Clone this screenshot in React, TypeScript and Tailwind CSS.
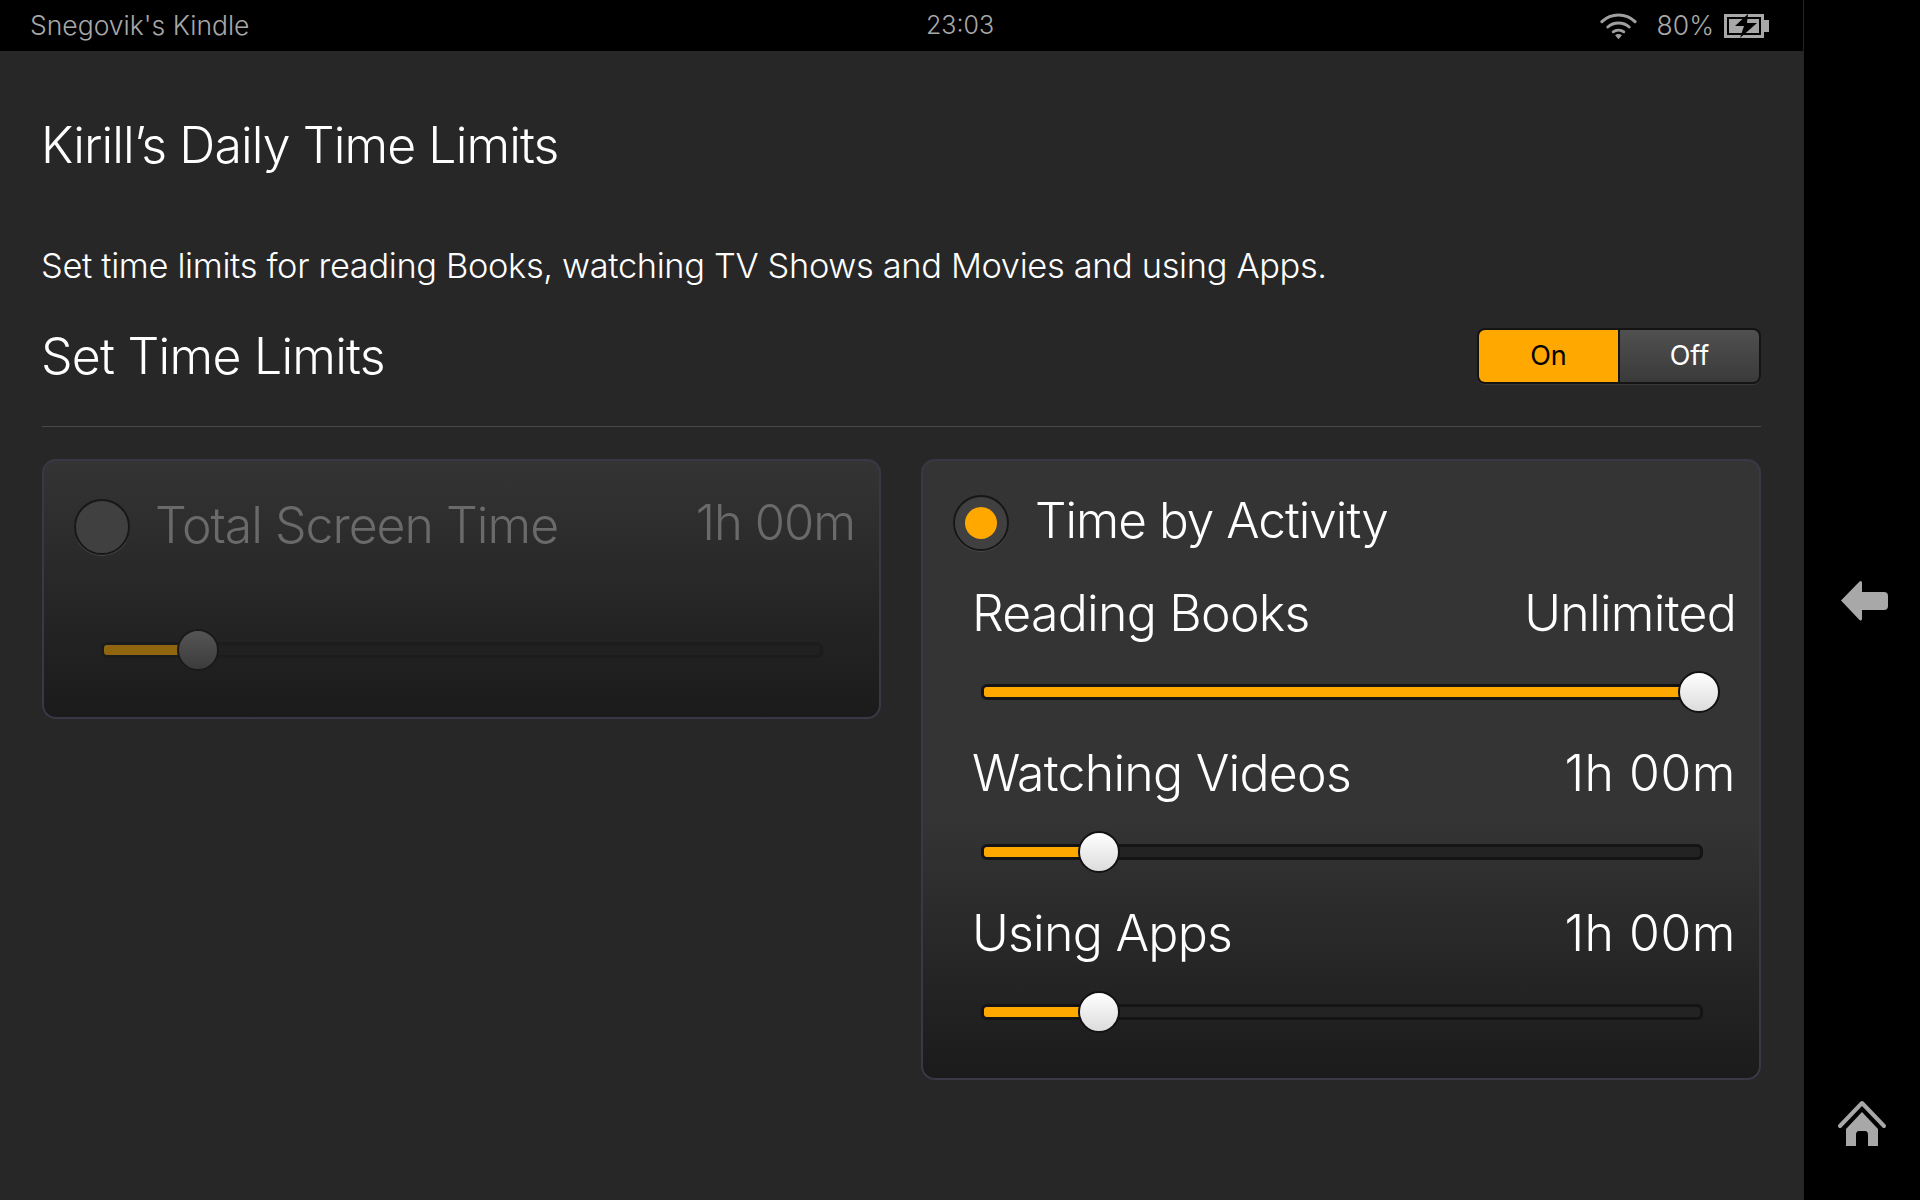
import React from "react";

function WifiIcon() {
  return (
    <svg width="37" height="28" viewBox="0 0 38 28" fill="none" stroke="#a0a0a0" strokeLinecap="round">
      <path d="M2 9.5 C11.5 0.5 26.5 0.5 36 9.5" strokeWidth="3.2" />
      <path d="M8 15 C14 9.5 24 9.5 30 15" strokeWidth="3" />
      <path d="M13.5 20 C16.5 17.5 21.5 17.5 24.5 20" strokeWidth="2.8" />
      <path d="M15.5 23.5 L19 27.5 L22.5 23.5 Q19 21 15.5 23.5Z" fill="#a0a0a0" stroke="none" />
    </svg>
  );
}

function BatteryIcon() {
  return (
    <svg width="45" height="24" viewBox="0 0 45 24">
      <rect x="1.5" y="1.5" width="37" height="21" fill="none" stroke="#a8a8a8" strokeWidth="3" />
      <rect x="40" y="6" width="5" height="12" fill="#a8a8a8" />
      <rect x="5" y="5" width="30" height="14" fill="#a8a8a8" />
      <path d="M24 0 L11 12 H20 L16 24 L33 9 H23 Z" fill="#000" />
    </svg>
  );
}

function BackIcon() {
  return (
    <svg width="48" height="42" viewBox="0 0 48 42" fill="#a8a8a8">
      <path d="M1 20.5 L19.5 1.5 Q22 0 22 3 V12 H44 Q48 12 48 16 V26 Q48 30 44 30 H22 V38.5 Q22 41.5 19.5 40 Z" />
    </svg>
  );
}

function HomeIcon() {
  return (
    <svg width="50" height="46" viewBox="0 0 50 46" fill="#a8a8a8">
      <path d="M3 26 L25 3 L47 26" fill="none" stroke="#a8a8a8" strokeWidth="4" strokeLinecap="round" strokeLinejoin="round" />
      <path d="M25 12 L41 29 V46 H31 V35 Q31 31 28 31 H22 Q19 31 19 35 V46 H9 V29 Z" />
    </svg>
  );
}

function Radio({ on }: { on?: boolean }) {
  return (
    <div className="w-[56px] h-[56px] shrink-0 rounded-full bg-[#404040] border-[2px] border-[#171717] shadow-[0_1px_0_#484848] flex items-center justify-center">
      {on && <div className="w-[32px] h-[32px] rounded-full bg-[#ffa800]" />}
    </div>
  );
}

function Slider({ value, disabled }: { value: number; disabled?: boolean }) {
  // value is in percent of the track, the knob sits at the end of the fill
  return (
    <div
      className={
        "relative h-[16px] w-[722px] rounded-[6px] border-[3px] " +
        (disabled ? "bg-[#202020] border-[#1c1c1c]" : "bg-[#232323] border-[#141414]")
      }
    >
      <div
        className={"h-full rounded-l-[3px] " + (disabled ? "bg-[#8f650f]" : "bg-[#ffa800]")}
        style={{ width: value + "%" }}
      />
      <div
        className={
          "absolute top-1/2 -translate-x-1/2 -translate-y-1/2 w-[42px] h-[42px] rounded-full border-[2px] " +
          (disabled
            ? "bg-gradient-to-b from-[#555555] to-[#3c3c3c] border-[#1a1a1a]"
            : "bg-gradient-to-b from-[#ffffff] to-[#dcdcdc] border-[#111111]")
        }
        style={{ left: value + "%" }}
      />
    </div>
  );
}

function ActivityRow({ label, time, value }: { label: string; time: string; value: number }) {
  return (
    <div className="h-[160px] flex flex-col">
      <div className="flex justify-between items-center h-[64px] pl-[49px] pr-[23px] text-[50px] font-light leading-none tracking-[-0.015em] text-white">
        <span>{label}</span>
        <span className={time === "Unlimited" ? "" : "tracking-[0.01em]"}>{time}</span>
      </div>
      <div className="mt-[39px] pl-[58px]">
        <Slider value={value} />
      </div>
    </div>
  );
}

export default function App() {
  return (
    <div className="flex w-[1920px] h-[1200px] overflow-hidden bg-black font-['Inter',sans-serif]">
      <div className="w-[1804px] flex flex-col bg-[#272727] border-r border-[#242424]">
        <div className="h-[51px] bg-black flex items-center pl-[30px] pr-[34px] text-[26.5px] text-[#a8a8a8] font-light">
          <div className="w-[896px]">Snegovik's Kindle</div>
          <div className="text-[25px]">23:03</div>
          <div className="flex-1 flex items-center justify-end">
            <WifiIcon />
            <span className="ml-[20px] mr-[10px]">80%</span>
            <BatteryIcon />
          </div>
        </div>

        <div className="px-[42px] flex flex-col flex-1">
          <h1 className="mt-[64px] -ml-px text-[50px] leading-[60px] font-light tracking-[-0.018em] text-white">
            Kirill’s Daily Time Limits
          </h1>
          <p className="mt-[71px] -ml-px text-[34.4px] leading-[40px] font-light tracking-[-0.01em] text-white">
            Set time limits for reading Books, watching TV Shows and Movies and using Apps.
          </p>
          <div className="mt-[40px] flex items-center justify-between pb-[40px] border-b border-[#484848]">
            <div className="-ml-px text-[50px] leading-[60px] font-light tracking-[-0.015em] text-white">
              Set Time Limits
            </div>
            <div className="flex w-[284px] h-[56px] rounded-[8px] bg-[#141414] p-[2px] text-[27px] shadow-[0_1px_0_#383838]">
              <div className="w-[139px] pt-px rounded-l-[6px] bg-[#ffa800] text-black flex items-center justify-center">
                On
              </div>
              <div className="ml-[2px] pt-px flex-1 rounded-r-[6px] bg-gradient-to-b from-[#505050] to-[#3a3a3a] text-white flex items-center justify-center">
                Off
              </div>
            </div>
          </div>

          <div className="mt-[32px] flex items-start justify-between">
            <div className="w-[839px] h-[260px] rounded-[14px] border-[2px] border-[#3a3846] bg-gradient-to-b from-[#343434] to-[#1b1b1b]">
              <div className="flex items-center h-[56px] mt-[38px] pl-[30px] pr-[24px]">
                <Radio />
                <span className="ml-[25px] -mt-[4px] text-[50px] leading-none font-light tracking-[-0.02em] text-[#6a6a6a]">
                  Total Screen Time
                </span>
                <span className="ml-auto -mt-[9px] text-[49px] leading-none font-light tracking-[-0.02em] text-[#6a6a6a]">
                  1h 00m
                </span>
              </div>
              <div className="mt-[87px] pl-[57px]">
                <Slider value={13.1} disabled />
              </div>
            </div>

            <div className="w-[840px] h-[621px] rounded-[14px] border-[2px] border-[#3a3846] bg-[linear-gradient(to_bottom,#343434_0%,#343434_58%,#1b1b1b_100%)]">
              <div className="flex items-center h-[56px] mt-[34px] pl-[30px]">
                <Radio on />
                <span className="ml-[26px] -mt-[5px] text-[49.5px] leading-none font-light tracking-[-0.02em] text-white">
                  Time by Activity
                </span>
              </div>
              <div className="mt-[30px]">
                <ActivityRow label="Reading Books" time="Unlimited" value={99.8} />
                <ActivityRow label="Watching Videos" time="1h 00m" value={16} />
                <ActivityRow label="Using Apps" time="1h 00m" value={16} />
              </div>
            </div>
          </div>
        </div>
      </div>

      <div className="flex-1 flex flex-col items-center">
        <div className="mt-[580px] ml-[4px]">
          <BackIcon />
        </div>
        <div className="mt-[478px]">
          <HomeIcon />
        </div>
      </div>
    </div>
  );
}
